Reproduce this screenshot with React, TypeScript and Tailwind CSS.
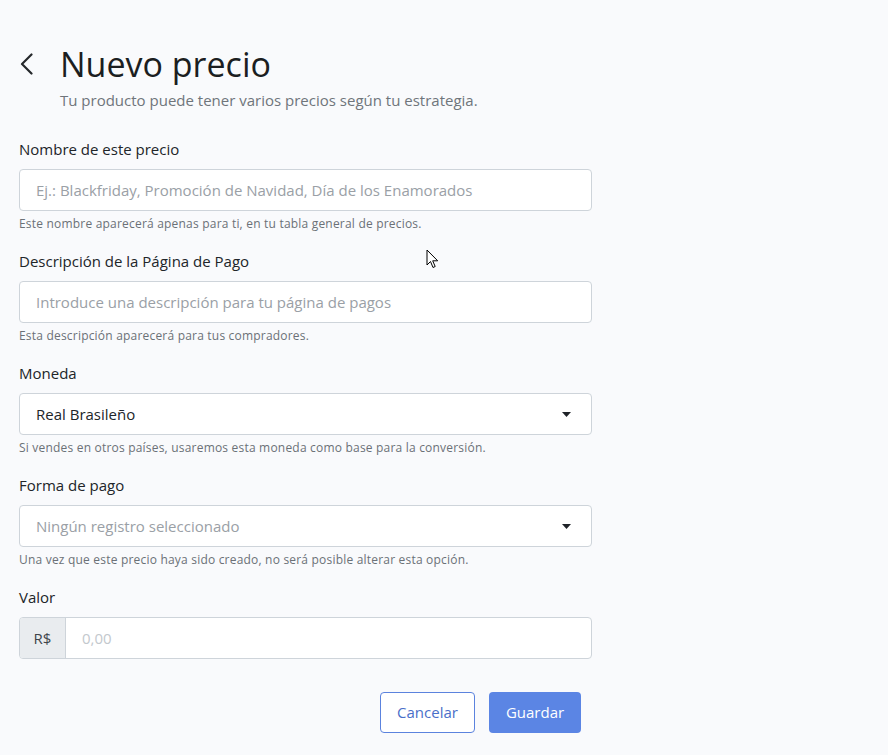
import React from "react";

function Caret() {
    return (
        <svg width="9" height="5" viewBox="0 0 9 5" className="shrink-0">
            <path d="M0 0h9L4.5 5z" fill="#1f2328" />
        </svg>
    );
}

function Field({ label, help, children }: { label: string; help?: string; children: React.ReactNode }) {
    return (
        <div className="flex flex-col">
            <label className="text-[15px] leading-[20px] text-[#212529]">{label}</label>
            <div className="mt-[10px]">{children}</div>
            {help && <p className="mt-[6px] text-[12px] leading-[14px] tracking-[0.2px] text-[#6b7177]">{help}</p>}
        </div>
    );
}

export default function App() {
    const font = { fontFamily: '"Open Sans", "Noto Sans", sans-serif' };
    const inputCls =
        "h-[42px] w-full rounded-[4px] border border-[#ced4da] bg-white px-[16px] text-[15px] text-[#212529] placeholder:text-[#9aa0a6] outline-none";

    return (
        <div className="relative min-h-[755px] w-[888px] bg-[#f9fafc] pl-[19px] pt-[40px]" style={font}>
            {/* Header */}
            <div className="flex items-center">
                <svg width="16" height="22" viewBox="0 0 16 22">
                    <path d="M12.5 1.5L3 11l9.5 9.5" fill="none" stroke="#25282b" strokeWidth="2.2" strokeLinecap="round" strokeLinejoin="round" />
                </svg>
                <h1 className="ml-[25px] text-[34px] leading-[48px] text-[#1b1e21]">Nuevo precio</h1>
            </div>
            <p className="ml-[41px] mt-[2px] text-[15px] leading-[20px] text-[#6f757b]">
                Tu producto puede tener varios precios según tu estrategia.
            </p>

            {/* Form */}
            <form className="mt-[29px] flex w-[573px] flex-col gap-[20px]">
                <Field label="Nombre de este precio" help="Este nombre aparecerá apenas para ti, en tu tabla general de precios.">
                    <input className={inputCls} placeholder="Ej.: Blackfriday, Promoción de Navidad, Día de los Enamorados" />
                </Field>
                <Field label="Descripción de la Página de Pago" help="Esta descripción aparecerá para tus compradores.">
                    <input className={inputCls} placeholder="Introduce una descripción para tu página de pagos" />
                </Field>
                <Field label="Moneda" help="Si vendes en otros países, usaremos esta moneda como base para la conversión.">
                    <div className="flex h-[42px] items-center justify-between rounded-[4px] border border-[#ced4da] bg-white pl-[16px] pr-[20px] text-[15px] text-[#212529]">
                        <span>Real Brasileño</span>
                        <Caret />
                    </div>
                </Field>
                <Field label="Forma de pago" help="Una vez que este precio haya sido creado, no será posible alterar esta opción.">
                    <div className="flex h-[42px] items-center justify-between rounded-[4px] border border-[#ced4da] bg-white pl-[16px] pr-[20px] text-[15px] text-[#9aa0a6]">
                        <span>Ningún registro seleccionado</span>
                        <Caret />
                    </div>
                </Field>
                <Field label="Valor">
                    <div className="flex h-[42px] overflow-hidden rounded-[4px] border border-[#ced4da] bg-white">
                        <span className="flex w-[46px] items-center justify-center border-r border-[#ced4da] bg-[#e9ecef] text-[15px] text-[#3f454b]">R$</span>
                        <input className="flex-1 px-[16px] text-[15px] outline-none placeholder:text-[#c3c8cd]" placeholder="0,00" />
                    </div>
                </Field>
                <div className="mt-[13px] flex justify-end gap-[14px] pr-[11px]">
                    <button type="button" className="h-[41px] w-[95px] rounded-[4px] border border-[#5b83de] bg-white text-[15px] text-[#4a6fc9]">
                        Cancelar
                    </button>
                    <button type="button" className="h-[41px] w-[92px] rounded-[4px] bg-[#5b85e4] text-[15px] font-medium text-white">
                        Guardar
                    </button>
                </div>
            </form>

            {/* mouse cursor */}
            <svg className="absolute left-[426px] top-[249px]" width="13" height="20" viewBox="0 0 13 20">
                <path d="M1 1v15l3.5-3.5 2.5 6 2.2-1-2.5-5.7h5z" fill="#fff" stroke="#000" strokeWidth="1" strokeLinejoin="round" />
            </svg>
        </div>
    );
}
